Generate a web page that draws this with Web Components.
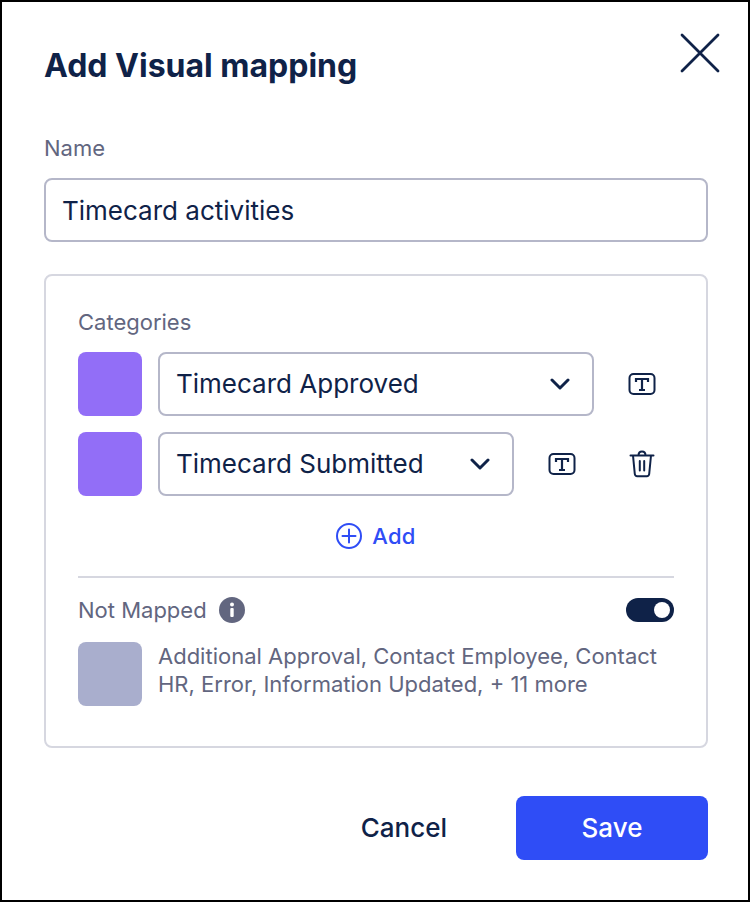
<!DOCTYPE html>
<html>
<head>
<meta charset="utf-8">
<style>
  html, body { margin: 0; padding: 0; background: #fff; }
  body { font-family: Inter, "Liberation Sans", sans-serif; color: #0f2248; }
</style>
</head>
<body>
<visual-mapping-dialog>
  <category-row slot="rows" label="Timecard Approved"></category-row>
  <category-row slot="rows" label="Timecard Submitted" removable></category-row>
</visual-mapping-dialog>

<script>
const NAVY = "#0f2248";
const MUTED = "#62667f";

const textIcon = `<svg width="28" height="22" viewBox="0 0 28 22" fill="none" stroke="${NAVY}" stroke-width="2">
  <rect x="1.5" y="1" width="25" height="20" rx="4"/>
  <path d="M8 9V6h12v3M14 6v11M11 17h6" stroke-width="2.2"/>
</svg>`;

const trashIcon = `<svg width="26" height="28" viewBox="0 0 26 28" fill="none" stroke="${NAVY}" stroke-width="2" stroke-linecap="round" stroke-linejoin="round">
  <path d="M1.5 5.5h23M4 5.5l1.800 18.500a2.500 2.500 0 0 0 2.500 2.200h9.400a2.500 2.500 0 0 0 2.500-2.200L22 5.500M9.500 5.500C9.500 3 11 1.500 13 1.500s3.500 1.500 3.500 4M10.800 11v9.500M15.200 11v9.500"/>
</svg>`;

class CategoryRow extends HTMLElement {
  constructor() {
    super();
    this.attachShadow({ mode: "open" });
  }
  connectedCallback() {
    const label = this.getAttribute("label");
    const removable = this.hasAttribute("removable");
    this.shadowRoot.innerHTML = `
    <style>
      :host { display: flex; gap: 16px; align-items: stretch; height: 64px; }
      .swatch { width: 64px; flex: none; background: #926ef7; border-radius: 8px; }
      .select {
        flex: 1; min-width: 0; box-sizing: border-box; display: flex; align-items: center;
        justify-content: space-between; padding: 0 22px 0 17px;
        border: 2px solid #b5b7c9; border-radius: 8px;
        font-size: 26px; color: ${NAVY};
      }
      .select span { margin: 0 0 2px -1px; }
      .btn { width: 64px; flex: none; display: flex; align-items: center; justify-content: center; }
      svg { display: block; }
    </style>
    <div class="swatch"></div>
    <div class="select">
      <span>${label}</span>
      <svg width="20" height="12" viewBox="0 0 20 12" fill="none" stroke="${NAVY}" stroke-width="3" stroke-linecap="round" stroke-linejoin="round"><path d="M2 2l8 8 8-8"/></svg>
    </div>
    <div class="btn">${textIcon}</div>
    ${removable ? `<div class="btn">${trashIcon}</div>` : ""}
    `;
  }
}

class ToggleSwitch extends HTMLElement {
  constructor() {
    super();
    this.attachShadow({ mode: "open" });
    this.shadowRoot.innerHTML = `
    <style>
      :host { display: flex; justify-content: flex-end; align-items: center; box-sizing: border-box;
        width: 48px; height: 24px; padding: 0 4px; border-radius: 12px; background: ${NAVY}; }
      i { display: block; width: 16px; height: 16px; border-radius: 50%; background: #fff; }
    </style>
    <i></i>
    `;
  }
}

class VisualMappingDialog extends HTMLElement {
  constructor() {
    super();
    this.attachShadow({ mode: "open" });
    this.shadowRoot.innerHTML = `
    <style>
      :host { display: block; box-sizing: border-box; width: 750px; height: 902px;
        border: 2px solid #000; background: #fff; padding: 0 40px 0 42px; }
      header { display: flex; justify-content: space-between; align-items: flex-start; height: 102px; }
      h1 { margin: 45px 0 0; font-size: 32px; line-height: 38px; font-weight: 700; color: ${NAVY}; }
      .close { margin: 31px -12px 0 0; width: 40px; height: 40px; }
      .label { font-size: 22px; line-height: 28px; color: ${MUTED}; }
      .name { height: 28px; margin-top: 30px; }
      .field { margin-top: 16px; box-sizing: border-box; height: 64px; display: flex; align-items: center;
        padding: 1px 16px 0; border: 2px solid #b5b7c9; border-radius: 8px;
        font-size: 26px; color: ${NAVY}; }
      .card { margin-top: 32px; box-sizing: border-box; height: 474px; padding: 32px 32px 0;
        border: 2px solid #d6d7e0; border-radius: 8px; }
      .rows { margin-top: 16px; display: flex; flex-direction: column; gap: 16px; }
      .add { margin-top: 24px; display: flex; justify-content: center; align-items: center; gap: 10px;
        height: 32px; font-size: 22px; font-weight: 500; color: #2f4df6; letter-spacing: 0.3px; }
      hr { margin: 24px 0 0; border: 0; height: 2px; background: #d6d7e0; }
      .mapped { margin-top: 19px; display: flex; align-items: center; height: 26px; }
      .mapped .info { margin-left: 12px; }
      .mapped toggle-switch { margin-left: auto; }
      .rest { margin-top: 19px; display: flex; gap: 16px; }
      .rest .swatch { width: 64px; height: 64px; flex: none; border-radius: 8px; background: #a9aecd; }
      .rest p { margin: 0; font-size: 22px; line-height: 28px; color: ${MUTED}; }
      footer { margin-top: 48px; display: flex; justify-content: flex-end; align-items: center; gap: 69px; }
      .cancel { font-size: 26px; font-weight: 500; color: ${NAVY}; padding-bottom: 2px; }
      .save { box-sizing: border-box; width: 192px; height: 64px; padding-bottom: 2px; border-radius: 8px; background: #2f4df6; color: #fff;
        display: flex; align-items: center; justify-content: center; font-size: 26px; font-weight: 500; }
      svg { display: block; }
    </style>
    <header>
      <h1>Add Visual mapping</h1>
      <svg class="close" viewBox="0 0 40 40" fill="none" stroke="${NAVY}" stroke-width="2.800" stroke-linecap="round"><path d="M2 2l36 36M38 2L2 38"/></svg>
    </header>
    <div class="label name">Name</div>
    <div class="field">Timecard activities</div>
    <section class="card">
      <div class="label">Categories</div>
      <div class="rows"><slot name="rows"></slot></div>
      <div class="add">
        <svg width="26" height="26" viewBox="0 0 26 26" fill="none" stroke="#2f4df6" stroke-width="2"><circle cx="13" cy="13" r="12"/><path d="M13 6.500v13M6.500 13h13" stroke-linecap="round"/></svg>
        <span>Add</span>
      </div>
      <hr>
      <div class="mapped">
        <span class="label">Not Mapped</span>
        <svg class="info" width="26" height="26" viewBox="0 0 26 26"><circle cx="13" cy="13" r="13" fill="${MUTED}"/><rect x="11.300" y="11" width="3.400" height="9" rx="1" fill="#fff"/><circle cx="13" cy="7.500" r="2" fill="#fff"/></svg>
        <toggle-switch></toggle-switch>
      </div>
      <div class="rest">
        <div class="swatch"></div>
        <p>Additional Approval, Contact Employee, Contact HR, Error, Information Updated, + 11 more</p>
      </div>
    </section>
    <footer>
      <span class="cancel">Cancel</span>
      <div class="save">Save</div>
    </footer>
    `;
  }
}

customElements.define("category-row", CategoryRow);
customElements.define("toggle-switch", ToggleSwitch);
customElements.define("visual-mapping-dialog", VisualMappingDialog);
</script>
</body>
</html>
